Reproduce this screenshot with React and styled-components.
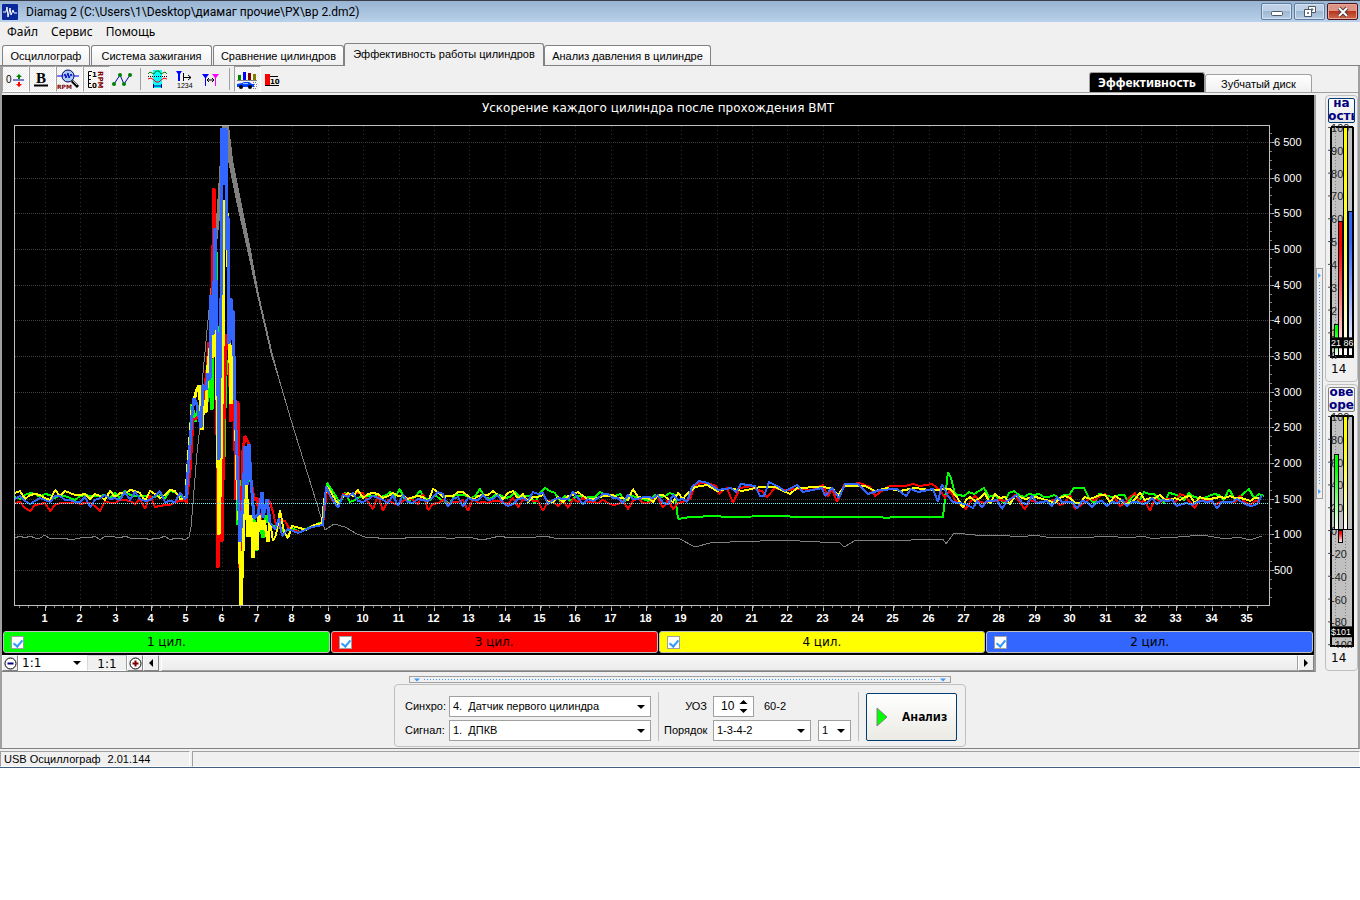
/* eslint-disable react/prop-types */
import React from 'react';
import styled, { createGlobalStyle, css } from 'styled-components';

const uiFont = "'Liberation Sans', Arial, sans-serif";
const wideFont = "'DejaVu Sans', Verdana, sans-serif";
const titleFont = "'Noto Sans', 'Open Sans', sans-serif";

const face = '#f0f0f0';
const line = '#a0a0a0';
const darkLine = '#828282';

const GlobalStyle = createGlobalStyle`
  * {
    box-sizing: border-box;
  }
  body {
    margin: 0;
    background: #fff;
    color: #000;
    font: 11px/14px ${uiFont};
  }
  button, input, select {
    font: inherit;
    color: inherit;
    margin: 0;
    padding: 0;
    border-radius: 0;
  }
  svg {
    display: block;
  }
`;

const Window = styled.div`
  background: ${face};
  border-top: 1px solid #3a3f47;
  border-bottom: 1px solid #3f5f7f;
`;

const TitleBar = styled.header`
  display: flex;
  align-items: center;
  gap: 8px;
  height: 21px;
  padding: 0 2px;
  background: linear-gradient(#98b4d2, #b9d1ea);
`;
const Title = styled.h1`
  flex: 1;
  margin: 0;
  font: 12px/18px Roboto, ${titleFont};
  white-space: nowrap;
`;
const Caption = styled.div`
  display: flex;
  gap: 2px;
`;
const CaptionButton = styled.button`
  display: flex;
  align-items: center;
  justify-content: center;
  width: 31px;
  height: 17px;
  border: 1px solid ${(p) => (p.$close ? '#4b1620' : '#5f7c9c')};
  border-radius: 2px;
  box-shadow: inset 0 0 0 1px ${(p) => (p.$close ? '#e8a898' : '#d3e3f3')};
  background: ${(p) =>
    p.$close
      ? 'linear-gradient(#dd9484 45%, #b9351f 50%, #cf6b4c)'
      : 'linear-gradient(#bdd0e5 45%, #9db8d3 50%, #b7cde4)'};
`;

const Menu = styled.nav`
  display: flex;
  gap: 13px;
  height: 21px;
  padding: 1px 7px 0;
`;
const MenuItem = styled.a`
  color: #000;
  font: 12px/18px ${titleFont};
  text-decoration: none;
`;

const Tabs = styled.div`
  display: flex;
  align-items: flex-end;
  height: 23px;
  padding-left: 2px;
  border-bottom: 1px solid ${darkLine};
`;
const Tab = styled.button`
  width: ${(p) => p.$width}px;
  height: 20px;
  margin-right: 1px;
  border: 1px solid ${darkLine};
  border-bottom: 0;
  border-radius: 3px 3px 0 0;
  background: linear-gradient(#fff, #f0f0f0);
  white-space: nowrap;
  ${(p) =>
    p.$active &&
    css`
      height: 23px;
      margin: 0 0 -1px -1px;
      padding-bottom: 3px;
      background: ${face};
    `}
`;

const Page = styled.main`
  border-left: 2px solid ${line};
  border-right: 2px solid ${line};
  border-bottom: 1px solid ${darkLine};
`;
const Toolbar = styled.div`
  display: flex;
  height: 27px;
  border-bottom: 1px solid ${line};
`;
const Tool = styled.button`
  width: 27px;
  height: 26px;
  border: 1px solid transparent;
  background: none;
  ${(p) =>
    p.$on &&
    css`
      border-color: ${line} #fff #fff ${line};
      background: repeating-conic-gradient(#fff 0 25%, #ececec 0 50%) 0 0 / 2px 2px;
    `}
`;
const ToolGap = styled.span`
  width: 8px;
  margin: 2px 0;
  background: linear-gradient(${line}, ${line}) 3px 0 / 1px 100% no-repeat;
`;
const ViewTabs = styled.div`
  display: flex;
  align-items: flex-end;
  margin-left: auto;
  padding-right: 46px;
`;
const ViewTab = styled.button`
  width: ${(p) => (p.$active ? 116 : 107)}px;
  height: ${(p) => (p.$active ? 20 : 18)}px;
  border: 1px solid ${line};
  border-bottom: 0;
  border-radius: 3px 3px 0 0;
  background: ${(p) => (p.$active ? '#000' : 'linear-gradient(#fff, #f0f0f0)')};
  color: ${(p) => (p.$active ? '#fff' : '#000')};
  font: ${(p) => (p.$active ? `bold 12px/14px ${titleFont}` : `11px/14px ${uiFont}`)};
`;

const Body = styled.div`
  display: flex;
  padding-top: 2px;
`;
const ChartColumn = styled.section`
  flex: 1;
  min-width: 0;
  border-right: 2px solid ${line};
  border-bottom: 1px solid ${darkLine};
`;
const Chart = styled.svg`
  width: 100%;
  height: auto;
  background: #000;
`;
const Legend = styled.div`
  display: grid;
  grid-template-columns: repeat(4, 1fr);
  gap: 1px;
  padding: 0 1px 2px;
  background: #000;
`;
const LegendItem = styled.label`
  position: relative;
  display: flex;
  align-items: center;
  justify-content: center;
  height: 22px;
  border: 1px solid #c0c0c0;
  border-radius: 3px;
  background: ${(p) => p.$color};
  font: 12px/14px ${wideFont};
`;
const LegendCheck = styled.input`
  position: absolute;
  left: 7px;
  width: 13px;
  height: 13px;
  appearance: none;
  border: 1px solid #a0a0a0;
  background: #fff;
  &:checked::after {
    content: '';
    position: absolute;
    left: 3px;
    top: 1px;
    width: 4px;
    height: 7px;
    border: solid #3399ff;
    border-width: 0 2px 2px 0;
    transform: rotate(40deg);
  }
`;

const ZoomRow = styled.div`
  display: flex;
  height: 16px;
`;
const SmallButton = styled.button`
  display: flex;
  align-items: center;
  justify-content: center;
  width: 16px;
  border: 1px solid;
  border-color: #fff ${darkLine} ${darkLine} #fff;
  background: ${face};
`;
const Ratio = styled.output`
  width: 40px;
  border: 1px solid;
  border-color: #d8d8d8 ${line} #fff #d8d8d8;
  font: 12px/16px ${wideFont};
  text-align: center;
`;
const Track = styled.div`
  flex: 1;
  margin-left: 2px;
  border: 1px solid;
  border-color: #fff ${line} ${line} #fff;
  background: linear-gradient(#f6f6f6, #ececec);
`;

const Combo = styled.span`
  position: relative;
  display: block;
  width: ${(p) => p.$width}px;
  height: ${(p) => (p.$flat ? 16 : 21)}px;
  &::after {
    content: '';
    position: absolute;
    right: 6px;
    top: ${(p) => (p.$flat ? 6 : 9)}px;
    border: solid transparent;
    border-width: 4px 4px 0;
    border-top-color: #000;
    pointer-events: none;
  }
  select {
    display: block;
    width: 100%;
    height: 100%;
    padding: 0 18px 0 ${(p) => (p.$flat ? 4 : 3)}px;
    appearance: none;
    border: ${(p) => (p.$flat ? '0' : `1px solid ${line}`)};
    background: #fff;
    font: ${(p) => (p.$flat ? `12px ${wideFont}` : `11px ${uiFont}`)};
  }
`;

const Splitter = styled.button`
  align-self: center;
  display: flex;
  flex-direction: ${(p) => (p.$wide ? 'row' : 'column')};
  align-items: center;
  gap: 4px;
  width: ${(p) => (p.$wide ? '542px' : '7px')};
  max-width: 100%;
  height: ${(p) => (p.$wide ? '7px' : '231px')};
  padding: ${(p) => (p.$wide ? '0 4px' : '4px 0')};
  border: 1px solid ${line};
  background: ${face};
`;
const Dots = styled.span`
  flex: 1;
  ${(p) =>
    p.$wide
      ? 'height: 1px; background: repeating-linear-gradient(90deg, #3399ff 0 1px, transparent 1px 3px);'
      : 'width: 1px; background: repeating-linear-gradient(#3399ff 0 1px, transparent 1px 3px);'}
`;

const Side = styled.aside`
  display: flex;
  flex-direction: column;
  gap: 2px;
  margin-left: 2px;
`;
const GaugeBox = styled.section`
  display: flex;
  flex-direction: column;
  width: 33px;
  height: 287px;
  padding: 2px;
  border: 1px solid #c0c0c0;
  border-radius: 4px;
`;
const GaugeButton = styled.button`
  width: 27px;
  height: 25px;
  overflow: hidden;
  border: 1px solid ${(p) => (p.$default ? '#003c74' : darkLine)};
  border-radius: 2px;
  background: linear-gradient(#fff, #e6e6e6);
  color: #000080;
  font: bold 12px/13px ${wideFont};
  span {
    display: block;
    height: 23px;
    margin: -4px -6px 0;
  }
`;
const GaugeValue = styled.div`
  font: 12px/20px ${wideFont};
  padding-left: 3px;
`;

const Controls = styled.div`
  display: flex;
  flex-direction: column;
  align-items: center;
  padding: 4px 0 1px;
  gap: 1px;
`;
const Panel = styled.form`
  display: flex;
  align-items: center;
  width: 572px;
  height: 63px;
  padding: 2px 8px 0 10px;
  border: 1px solid #c0c0c0;
  border-radius: 4px;
  label, output {
    white-space: nowrap;
  }
`;
const Fields = styled.div`
  display: grid;
  grid-template-columns: ${(p) => p.$label}px auto;
  row-gap: 3px;
  align-items: center;
  padding-top: 3px;
`;
const FieldRow = styled.div`
  display: flex;
  align-items: center;
  gap: ${(p) => p.$gap}px;
`;
const RightLabel = styled.label`
  padding-right: 6px;
  text-align: right;
`;
const Rule = styled.span`
  width: 1px;
  height: 49px;
  margin: 0 ${(p) => p.$after}px 0 7px;
  background: #c0c0c0;
`;
const Spinner = styled.span`
  display: flex;
  align-items: center;
  width: 41px;
  height: 21px;
  padding: 0 5px 0 7px;
  border: 1px solid ${line};
  background: #fff;
  input {
    width: 18px;
    border: 0;
    outline: 0;
    font-size: 12px;
  }
`;
const AnalyseButton = styled.button`
  display: flex;
  align-items: center;
  gap: 14px;
  width: 91px;
  height: 48px;
  padding-left: 9px;
  border: 1px solid #003c74;
  border-radius: 2px;
  background: linear-gradient(#fff, #ebeae4);
  font: bold 12px ${titleFont};
`;

const StatusBar = styled.footer`
  display: flex;
  gap: 2px;
  height: 18px;
  padding-top: 2px;
`;
const StatusCell = styled.div`
  display: flex;
  gap: 7px;
  flex: ${(p) => (p.$grow ? '1' : '0 0 190px')};
  padding-left: 3px;
  border: 1px solid;
  border-color: ${line} #fff #fff ${line};
  line-height: 15px;
  white-space: nowrap;
`;

/* ---------- toolbar icons ---------- */

const iconText = { fontFamily: "'DejaVu Sans', sans-serif", fontWeight: 'bold' };

const icons = {
  zero: (
    <>
      <text x="5" y="16" fontSize="10" fontFamily={uiFont}>0</text>
      <path d="M12 13h11" stroke="#0000a0" />
      <path d="M18 7l3 3h-2v2h-2v-2h-2z" fill="#008000" />
      <path d="M17 15h2v2h2l-3 3-3-3h2z" fill="#f00" />
    </>
  ),
  bold: (
    <>
      <text x="8" y="16" fontSize="15" fontFamily="'Liberation Serif', serif" fontWeight="bold">B</text>
      <path d="M6 18.500h14" stroke="#000" strokeWidth="2" />
    </>
  ),
  magnifier: (
    <>
      <circle cx="13" cy="9" r="6" fill="#a6caf0" stroke="#000060" />
      <path d="M2 9h6M19 9h5" stroke="#00f" />
      <path d="M9 9l1-2 1 4 2-5 1 5 2-4 1 2" fill="none" stroke="#0000c0" />
      <path d="M17 14l6 6" stroke="#000" strokeWidth="3" />
      <path d="M18 14l4 4" stroke="#c0c0c0" />
      <text x="2" y="22" fontSize="6" fill="#800000" {...iconText}>RPM</text>
    </>
  ),
  scale: (
    <>
      <path d="M10 4.500H6.500v16H10M7 8.500h2M7 12.500h2M7 16.500h2" fill="none" stroke="#000" />
      <text x="10" y="10" fontSize="7" {...iconText}>1</text>
      <text x="10" y="21" fontSize="7" {...iconText}>0</text>
      <text x="4" y="-16" fontSize="7" fill="#800000" transform="rotate(90)" {...iconText}>RPM</text>
    </>
  ),
  points: (
    <>
      <path d="M5 17l6-9 4 9 6-9" fill="none" stroke="#0000c0" />
      <g fill="#008000">
        <circle cx="5" cy="17" r="2" />
        <circle cx="11" cy="8" r="2" />
        <circle cx="15" cy="17" r="2" />
        <circle cx="21" cy="8" r="2" />
      </g>
    </>
  ),
  phases: (
    <>
      <path d="M9 3h9v18H9z" fill="#0ff" />
      <path d="M4 7l2-2 4 2 2-3h3l2 3 4-2 2 2" fill="none" stroke="#008000" />
      <path d="M4 9.500h19" stroke="#000" strokeDasharray="1 1" />
      <path d="M4 12l3-1 3 2 2 2h3l2-2 3-2 3 1" fill="none" stroke="#f00" />
      <path d="M9.500 17v4M17.500 17v4M10 19h7" stroke="#000080" />
    </>
  ),
  markers: (
    <>
      <path d="M5 4h6L9 7v7H7V7z" fill="#00f" />
      <path d="M12.500 6v8M13 10.500h7M17 8l3 2.500-3 2.500" fill="none" stroke="#000" />
      <text x="6" y="21" fontSize="7" fontFamily={uiFont}>1234</text>
    </>
  ),
  between: (
    <>
      <path d="M4 7h7L8 11v8H7v-8z" fill="#00f" />
      <path d="M14 7h7l-3 4v8h-1v-8z" fill="#f0f" />
      <path d="M9 13h7M11 11l-2 2 2 2M14 11l2 2-2 2" fill="none" stroke="#000" />
    </>
  ),
  efficiency: (
    <>
      <path d="M5 8h3v5H5z" fill="#008000" />
      <path d="M10 5h3v8h-3z" fill="#00f" />
      <path d="M15 6h3v7h-3z" fill="#800000" />
      <path d="M20 7h3v6h-3z" fill="#808000" />
      <path d="M4 13.500h20" stroke="#808080" />
      <path d="M4 20v-3l5-1 2-1h5l3 2h2v3z" fill="#0040ff" />
      <path d="M10 16h5v1h-5z" fill="#a6caf0" />
      <circle cx="8" cy="20" r="2" />
      <circle cx="17" cy="20" r="2" />
      <path d="M20 15.500h4M21 17.500h4M21 19.500h3M20 21.500h4" stroke="#808080" strokeDasharray="1 1" />
    </>
  ),
  ten: (
    <>
      <path d="M5 7h5v11H5z" fill="#f00" />
      <path d="M10 9.500h8M5 18.500h14" stroke="#000" />
      <text x="10" y="17" fontSize="7" {...iconText}>10</text>
    </>
  ),
};

function ToolIcon({ name }) {
  return (
    <svg width="25" height="24" viewBox="2 0 25 24" aria-hidden="true">
      {icons[name]}
    </svg>
  );
}

const tools = [
  { icon: 'zero', on: true },
  { icon: 'bold', on: true },
  { icon: 'magnifier', on: true },
  { icon: 'scale', on: true },
  { icon: 'points' },
  null,
  { icon: 'phases' },
  { icon: 'markers' },
  { icon: 'between' },
  null,
  { icon: 'efficiency', on: true },
  { icon: 'ten' },
];

/* ---------- chart data, in drawing units ---------- */

function wobble(seed, from, to, base, amp, step = 5) {
  const points = [];
  let s = seed;
  for (let x = from; x <= to; x += step) {
    s = (s * 9301 + 49297) % 233280;
    const r = s / 233280 - 0.5;
    // cubing keeps most points flat with a few sharp ones
    points.push([x, Math.round(base + amp * (r * 0.6 + r * r * r * 5))]);
  }
  return points;
}

const toPath = (points) => `M${points.map((p) => p.join(' ')).join('L')}`;

const traces = [
  {
    color: '#00ff00',
    before: wobble(11, 15, 186, 496, 6),
    peak: [[186, 496], [189, 460], [192, 404], [195, 422], [199, 405], [202, 420], [204, 390], [207, 402], [209, 375], [212, 410], [214, 290], [216, 250], [218, 400], [219, 440], [221, 320], [224, 458], [226, 360], [230, 380], [233, 380], [236, 440], [238, 525], [240, 480], [244, 510], [247, 455], [250, 470], [253, 505], [256, 551], [259, 520], [263, 538], [266, 515], [271, 528], [276, 525], [284, 532], [292, 528], [300, 532], [310, 527], [322, 522], [324, 510], [327, 483], [332, 490], [340, 503]],
    after: [...wobble(23, 345, 672, 496, 9), [675, 495], [678, 519], [690, 517], [717, 516], [725, 517], [779, 516], [800, 517], [880, 517], [886, 518], [895, 517], [943, 517], [948, 472], [951, 478], [955, 494], ...wobble(31, 959, 1264, 495, 9)],
  },
  {
    color: '#ff0000',
    before: wobble(57, 15, 186, 503, 9),
    peak: [[186, 504], [190, 470], [193, 420], [197, 418], [201, 410], [204, 395], [207, 370], [209, 342], [211, 360], [214, 188], [216, 300], [218, 568], [220, 480], [219, 390], [222, 542], [224, 420], [226, 334], [229, 350], [231, 422], [233, 352], [236, 500], [238, 401], [240, 568], [243, 450], [245, 436], [248, 442], [251, 480], [254, 500], [257, 498], [260, 520], [264, 510], [269, 500], [273, 512], [277, 530], [281, 520], [285, 521], [290, 530], [300, 532], [312, 527], [323, 524], [327, 490], [332, 500], [338, 507]],
    after: [...wobble(71, 343, 686, 502, 10), [690, 499], [695, 485], [701, 483], [710, 484], [716, 486], [719, 494], [723, 490], [727, 488], [733, 503], [740, 488], [752, 486], [757, 490], [762, 491], [767, 497], [775, 488], [785, 490], [800, 489], [812, 490], [823, 485], [828, 497], [832, 489], [837, 502], [844, 485], [860, 483], [870, 487], [875, 496], [883, 490], [890, 486], [905, 486], [913, 484], [920, 486], [932, 484], [940, 490], [945, 498], [950, 490], [955, 500], [966, 509], ...wobble(83, 970, 1264, 502, 10)],
  },
  {
    color: '#ffff00',
    before: wobble(101, 15, 186, 495, 8),
    peak: [[186, 494], [189, 450], [192, 410], [196, 392], [199, 385], [202, 430], [204, 400], [206, 413], [208, 365], [211, 340], [213, 358], [215, 240], [217, 400], [219, 535], [221, 460], [223, 350], [224, 200], [225, 230], [227, 212], [229, 320], [231, 404], [233, 345], [235, 400], [237, 480], [239, 520], [241, 606], [243, 552], [246, 460], [248, 537], [251, 515], [253, 558], [255, 522], [257, 550], [259, 515], [262, 530], [264, 520], [268, 542], [270, 520], [273, 541], [276, 535], [280, 510], [284, 532], [288, 538], [292, 526], [300, 528], [306, 530], [314, 525], [322, 523], [324, 500], [327, 486], [332, 494], [338, 504]],
    after: [...wobble(113, 343, 684, 496, 8), [686, 495], [695, 487], [707, 485], [717, 491], [730, 488], [742, 491], [760, 487], [775, 487], [790, 494], [797, 488], [820, 487], [832, 488], [838, 495], [845, 486], [865, 486], [875, 491], [887, 488], [900, 491], [915, 488], [930, 490], [950, 489], [957, 497], [963, 508], [966, 500], ...wobble(127, 970, 1264, 498, 7)],
  },
  {
    color: '#3366ff',
    before: wobble(131, 15, 186, 499, 9),
    peak: [[186, 498], [189, 460], [192, 415], [194, 398], [197, 405], [201, 428], [203, 385], [206, 390], [208, 373], [210, 380], [211, 295], [213, 335], [215, 228], [217, 330], [219, 460], [221, 300], [222, 128], [223, 185], [224, 128], [225, 185], [226, 128], [227, 250], [228, 216], [229, 344], [231, 298], [232, 340], [233, 310], [235, 400], [236, 430], [238, 480], [240, 542], [243, 500], [245, 446], [247, 485], [249, 444], [251, 480], [254, 518], [258, 515], [262, 492], [263, 518], [267, 499], [270, 522], [275, 530], [279, 518], [282, 536], [288, 529], [298, 533], [312, 527], [323, 525], [326, 486], [330, 495], [338, 508]],
    after: [...wobble(149, 343, 684, 499, 9), [687, 502], [692, 487], [699, 481], [708, 483], [718, 490], [731, 488], [736, 492], [741, 484], [755, 486], [760, 496], [764, 496], [769, 482], [777, 486], [785, 491], [797, 485], [803, 492], [822, 488], [825, 496], [832, 488], [839, 498], [845, 484], [858, 484], [868, 494], [880, 490], [897, 489], [906, 496], [911, 489], [918, 492], [933, 489], [938, 502], [942, 484], [948, 496], [953, 502], [965, 504], [973, 508], ...wobble(157, 977, 1264, 501, 9)],
  },
];

const rpm = [
  ...wobble(211, 15, 186, 538, 3),
  [189, 537], [191, 527], [193, 503], [197, 453], [200, 427], [203, 373], [208, 320], [212, 280], [218, 207], [221, 163], [223, 127],
  [227, 127], [231, 160], [240, 205], [248, 245], [258, 295], [272, 355], [291, 420], [325, 530],
  [334, 524], [345, 527], [357, 534],
  ...wobble(223, 365, 640, 538, 2, 9),
  [678, 538], [695, 547], [710, 543], [730, 542], [790, 540], [800, 541], [840, 543], [844, 547], [856, 540], [880, 541], [943, 539], [946, 544], [954, 533], [975, 535], [1000, 535],
  ...wobble(227, 1010, 1268, 537, 4, 12),
];

const yLabels = ['6 500', '6 000', '5 500', '5 000', '4 500', '4 000', '3 500', '3 000', '2 500', '2 000', '1 500', '1 000', '500'];
const yAt = (i) => Math.round(142.1 + i * 35.67) + 0.5;
const xAt = (n) => Math.round(45 + (n - 1) * 35.35) + 0.5;
const seconds = Array.from({ length: 35 }, (_, i) => i + 1);
const minorX = Array.from({ length: 141 }, (_, i) => Math.round(19 + i * 8.84) + 0.5);
const minorY = Array.from({ length: 53 }, (_, i) => Math.round(133 + i * 8.92) + 0.5);

function EfficiencyChart() {
  return (
    <Chart viewBox="2 95 1312 536" role="img" aria-label="Ускорение каждого цилиндра">
      <text x="658" y="112" fill="#fff" fontSize="12" fontFamily={wideFont} textAnchor="middle">
        Ускорение каждого цилиндра после прохождения ВМТ
      </text>
      <g stroke="#404040" strokeDasharray="1 1" shapeRendering="crispEdges">
        {yLabels.map((l, i) => <path key={l} d={`M15 ${yAt(i)}H1269`} />)}
      </g>
      <g stroke="#303030" strokeDasharray="1 3" shapeRendering="crispEdges">
        {seconds.map((n) => <path key={n} d={`M${xAt(n)} 126V605`} />)}
      </g>
      <g fill="none" strokeLinejoin="bevel" shapeRendering="crispEdges">
        <path d={toPath(rpm)} stroke="#808080" />
        <path
          d="M225 126H229L233 160L242 205L250 245L259 295L273 355L291 420L271 355L257 295L246 245L237 205L228 160Z"
          fill="#808080"
        />
        <path d="M208 320L217 207L222 126H226L221 207L212 290Z" fill="#808080" />
        {traces.map((t) => (
          <g key={t.color} stroke={t.color}>
            <path d={toPath([...t.before, t.peak[0]])} strokeWidth="2" />
            <path d={toPath(t.peak.filter((p) => p[0] < 272))} strokeWidth="3" />
            <path d={toPath([...t.peak.filter((p) => p[0] > 268), ...t.after])} strokeWidth="2" />
          </g>
        ))}
      </g>
      <path d="M15 503.500H1269" stroke="#60ffff" strokeDasharray="1 1" shapeRendering="crispEdges" />
      <g fill="none" stroke="#c0c0c0" shapeRendering="crispEdges">
        <path d="M14.500 125.500H1269.500V605.500H14.500Z" />
        {seconds.map((n) => <path key={n} d={`M${xAt(n)} 606v5`} />)}
        {minorX.map((x) => <path key={x} d={`M${x} 606v2`} stroke="#808080" />)}
        {yLabels.map((l, i) => <path key={l} d={`M1270 ${yAt(i)}h4`} />)}
        {minorY.map((y) => <path key={y} d={`M1270 ${y}h2`} stroke="#808080" />)}
      </g>
      <g fill="#fff" fontFamily={uiFont} fontSize="11">
        {yLabels.map((l, i) => <text key={l} x="1274" y={yAt(i) + 3.5}>{l}</text>)}
      </g>
      <g fill="#fff" fontFamily={uiFont} fontSize="11" fontWeight="bold" textAnchor="middle">
        {seconds.map((n) => <text key={n} x={xAt(n) - 1} y="622">{n}</text>)}
      </g>
    </Chart>
  );
}

/* ---------- gauges ---------- */

const barColors = ['#00ff00', '#ff0000', '#ffff00', '#3366ff'];
const barX = [6.5, 10.5, 15.5, 20.5];

function Gauge({ id, labels, bars, tag, tagY, zero }) {
  return (
    <svg width="27" height="238" viewBox="0 0 27 238" aria-hidden="true">
      <defs>
        {barColors.map((c, i) => (
          <linearGradient key={c} id={`${id}${i}`} x1="0" y1="0" x2="0" y2="1">
            <stop offset="0.2" stopColor={c} />
            <stop offset="1" stopColor="#fff" />
          </linearGradient>
        ))}
      </defs>
      <g shapeRendering="crispEdges">
        <path d="M3 3h22v233H3z" fill="#c0c0c0" />
        <path d="M3 4h22M3 4v232h22V4" fill="none" stroke="#000" strokeWidth="2" />
        <path d="M7.500 4v232M17.500 4v232" stroke="#808080" strokeDasharray="1 2" />
      </g>
      {labels.map((l, i) => (
        <g key={l}>
          <path d={`M0 ${4.5 + i * 23}h3`} stroke="#404040" />
          <text x="3" y={9 + i * 23} fontFamily={uiFont} fontSize="11" fill="#202020">{l}</text>
        </g>
      ))}
      <g shapeRendering="crispEdges" stroke="#000">
        {bars.map(([color, top, height]) => (
          <rect key={color} x={barX[color]} y={top} width="4" height={height} fill={`url(#${id}${color})`} />
        ))}
        {zero && <path d={`M3 ${zero}h22`} />}
      </g>
      <rect x="3" y={tagY} width="22" height="11" />
      <text x="3" y={tagY + 9} fill="#fff" fontFamily={uiFont} fontSize="9">{tag}</text>
    </svg>
  );
}

function Arrow({ points, color = '#000', size = 8 }) {
  return (
    <svg width={size} height={size} viewBox="0 0 8 8" aria-hidden="true">
      <polygon points={points} fill={color} />
    </svg>
  );
}

function RoundSign({ color, plus }) {
  return (
    <svg width="13" height="13" viewBox="0 0 13 13" aria-hidden="true">
      <circle cx="6.5" cy="6.5" r="5.5" fill="#fff" stroke="#000" />
      <path d={plus ? 'M3.500 6.500h6M6.500 3.500v6' : 'M3.500 6.500h6'} stroke={color} strokeWidth="2" />
    </svg>
  );
}

function Logo() {
  return (
    <svg width="16" height="16" viewBox="0 0 16 16" aria-hidden="true">
      <rect width="16" height="16" rx="1" fill="#0a2a9c" />
      <path d="M1 8h3l1-5 1 10 2-9 1 7 2-5 1 3h3" fill="none" stroke="#fff" />
    </svg>
  );
}

const tabs = [
  ['Осциллограф', 88],
  ['Система зажигания', 121],
  ['Сравнение цилиндров', 131],
  ['Эффективность работы цилиндров', 200],
  ['Анализ давления в цилиндре', 167],
];

const cylinders = [
  ['1 цил.', '#00ff00'],
  ['3 цил.', '#ff0000'],
  ['4 цил.', '#ffff00'],
  ['2 цил.', '#3366ff'],
];

const down = '0,2 8,2 4,6';
const right = '2,0 6,4 2,8';
const left = '6,0 2,4 6,8';

export default function App() {
  return (
    <Window>
      <GlobalStyle />
      <TitleBar>
        <Logo />
        <Title>Diamag 2 (C:\Users\1\Desktop\диамаг прочие\РХ\вр 2.dm2)</Title>
        <Caption>
          <CaptionButton aria-label="Свернуть">
            <svg width="12" height="11" viewBox="0 0 12 11">
              <rect x="0.5" y="5.5" width="11" height="4" rx="1" fill="#fff" stroke="#4d5a68" />
            </svg>
          </CaptionButton>
          <CaptionButton aria-label="Восстановить">
            <svg width="12" height="11" viewBox="0 0 12 11">
              <path d="M4.500 0.500h7v6h-7zM7 3h2v1H7z" fill="#fff" stroke="#4d5a68" />
              <path d="M0.500 3.500h7v7h-7z" fill="#fff" stroke="#4d5a68" />
              <path d="M3.500 6.500h1v1h-1z" fill="none" stroke="#4d5a68" />
            </svg>
          </CaptionButton>
          <CaptionButton $close aria-label="Закрыть">
            <svg width="12" height="10" viewBox="0 0 12 10">
              <path d="M2 1l8 8M10 1l-8 8" stroke="#4d3a40" strokeWidth="4" />
              <path d="M2 1l8 8M10 1l-8 8" stroke="#fff" strokeWidth="2" />
            </svg>
          </CaptionButton>
        </Caption>
      </TitleBar>
      <Menu>
        <MenuItem href="#file">Файл</MenuItem>
        <MenuItem href="#service">Сервис</MenuItem>
        <MenuItem href="#help">Помощь</MenuItem>
      </Menu>
      <Tabs>
        {tabs.map(([name, width], i) => (
          <Tab key={name} $width={width} $active={i === 3}>{name}</Tab>
        ))}
      </Tabs>
      <Page>
        <Toolbar>
          {tools.map((tool, i) =>
            tool ? (
              <Tool key={tool.icon} $on={tool.on} aria-label={tool.icon}>
                <ToolIcon name={tool.icon} />
              </Tool>
            ) : (
              // eslint-disable-next-line react/no-array-index-key
              <ToolGap key={i} />
            )
          )}
          <ViewTabs>
            <ViewTab $active>Эффективность</ViewTab>
            <ViewTab>Зубчатый диск</ViewTab>
          </ViewTabs>
        </Toolbar>
        <Body>
          <ChartColumn>
            <EfficiencyChart />
            <Legend>
              {cylinders.map(([name, color]) => (
                <LegendItem key={name} $color={color}>
                  <LegendCheck type="checkbox" defaultChecked />
                  {name}
                </LegendItem>
              ))}
            </Legend>
            <ZoomRow>
              <SmallButton aria-label="Уменьшить"><RoundSign color="#000080" /></SmallButton>
              <Combo $width={69} $flat>
                <select aria-label="Масштаб"><option>1:1</option></select>
              </Combo>
              <Ratio>1:1</Ratio>
              <SmallButton aria-label="Увеличить"><RoundSign color="#800000" plus /></SmallButton>
              <SmallButton aria-label="Влево"><Arrow points={left} /></SmallButton>
              <Track />
              <SmallButton aria-label="Вправо"><Arrow points={right} /></SmallButton>
            </ZoomRow>
          </ChartColumn>
          <Splitter aria-label="Скрыть шкалы">
            <Arrow points={right} color="#3399ff" size={5} />
            <Dots />
            <Arrow points={right} color="#3399ff" size={5} />
          </Splitter>
          <Side>
            <GaugeBox>
              <GaugeButton $default><span>на юсть</span></GaugeButton>
              <Gauge
                id="power"
                labels={['100', '90', '80', '70', '60', '5', '4', '3', '2', '1', '0']}
                bars={[[0, 203.5, 31], [1, 99.5, 135], [2, 4.5, 230], [3, 89.5, 145]]}
                tag="21 86"
                tagY={216}
              />
              <GaugeValue>14</GaugeValue>
            </GaugeBox>
            <GaugeBox>
              <GaugeButton><span>ове оре</span></GaugeButton>
              <Gauge
                id="delta"
                labels={['100', '80', '60', '40', '20', '0', '-20', '-40', '-60', '-80', '-100']}
                bars={[[0, 42.5, 76], [2, 4.5, 114], [1, 119.5, 12]]}
                tag="$101"
                tagY={216}
                zero={118.5}
              />
              <GaugeValue>14</GaugeValue>
            </GaugeBox>
          </Side>
        </Body>
        <Controls>
          <Splitter $wide aria-label="Скрыть панель">
            <Arrow points={down} color="#3399ff" size={6} />
            <Dots $wide />
            <Arrow points={down} color="#3399ff" size={6} />
          </Splitter>
          <Panel onSubmit={(e) => e.preventDefault()}>
            <Fields $label={44}>
              <label htmlFor="sync">Синхро:</label>
              <Combo $width={202}>
                <select id="sync"><option>4.{'\u00a0\u00a0'}Датчик первого цилиндра</option></select>
              </Combo>
              <label htmlFor="signal">Сигнал:</label>
              <Combo $width={202}>
                <select id="signal"><option>1.{'\u00a0\u00a0'}ДПКВ</option></select>
              </Combo>
            </Fields>
            <Rule $after={5} />
            <Fields $label={49}>
              <RightLabel htmlFor="uoz">УОЗ</RightLabel>
              <FieldRow $gap={10}>
                <Spinner>
                  <input id="uoz" defaultValue="10" />
                  <svg width="9" height="13" viewBox="0 0 9 13" aria-hidden="true">
                    <path d="M4.500 0l4 4h-8zM4.500 13l4-4h-8z" />
                  </svg>
                </Spinner>
                <output>60-2</output>
              </FieldRow>
              <RightLabel htmlFor="order">Порядок</RightLabel>
              <FieldRow $gap={7}>
                <Combo $width={98}>
                  <select id="order"><option>1-3-4-2</option></select>
                </Combo>
                <Combo $width={33}>
                  <select aria-label="Первый цилиндр"><option>1</option></select>
                </Combo>
              </FieldRow>
            </Fields>
            <Rule $after={7} />
            <AnalyseButton>
              <svg width="12" height="20" viewBox="0 0 12 20" aria-hidden="true">
                <path d="M1 1l10 9-10 9z" fill="#00ff00" stroke="#808080" />
              </svg>
              Анализ
            </AnalyseButton>
          </Panel>
        </Controls>
      </Page>
      <StatusBar>
        <StatusCell>
          <span>USB Осциллограф</span>
          <span>2.01.144</span>
        </StatusCell>
        <StatusCell $grow />
      </StatusBar>
    </Window>
  );
}
